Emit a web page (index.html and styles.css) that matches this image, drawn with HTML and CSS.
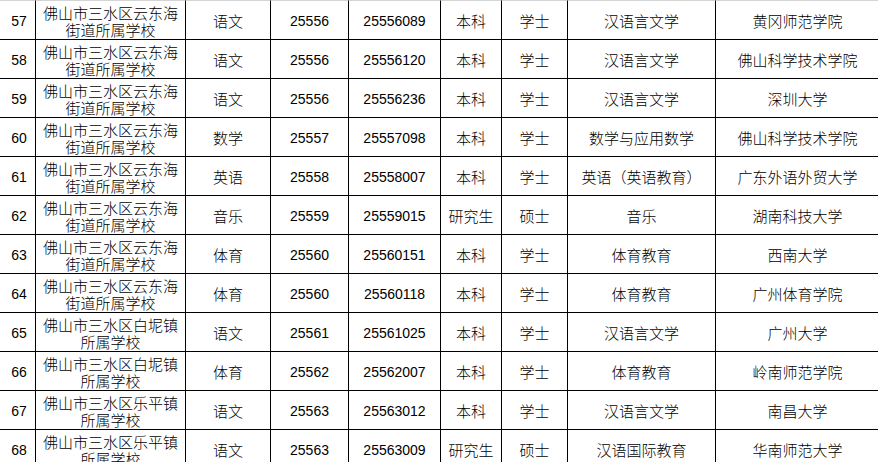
FILE: index.html
```html
<!DOCTYPE html>
<html lang="zh-CN">
<head>
<meta charset="utf-8">
<title>招聘岗位表</title>
<link rel="stylesheet" href="styles.css">
</head>
<body>
<table class="grid">
<colgroup>
<col class="c-idx"><col class="c-school"><col class="c-subj"><col class="c-code"><col class="c-post"><col class="c-edu"><col class="c-deg"><col class="c-major"><col class="c-uni">
</colgroup>
<tbody>
<tr><td class="num idx">57</td><td>佛山市三水区云东海<br>街道所属学校</td><td>语文</td><td class="num">25556</td><td class="num">25556089</td><td>本科</td><td>学士</td><td>汉语言文学</td><td>黄冈师范学院</td></tr>
<tr><td class="num idx">58</td><td>佛山市三水区云东海<br>街道所属学校</td><td>语文</td><td class="num">25556</td><td class="num">25556120</td><td>本科</td><td>学士</td><td>汉语言文学</td><td>佛山科学技术学院</td></tr>
<tr><td class="num idx">59</td><td>佛山市三水区云东海<br>街道所属学校</td><td>语文</td><td class="num">25556</td><td class="num">25556236</td><td>本科</td><td>学士</td><td>汉语言文学</td><td>深圳大学</td></tr>
<tr><td class="num idx">60</td><td>佛山市三水区云东海<br>街道所属学校</td><td>数学</td><td class="num">25557</td><td class="num">25557098</td><td>本科</td><td>学士</td><td>数学与应用数学</td><td>佛山科学技术学院</td></tr>
<tr><td class="num idx">61</td><td>佛山市三水区云东海<br>街道所属学校</td><td>英语</td><td class="num">25558</td><td class="num">25558007</td><td>本科</td><td>学士</td><td>英语（英语教育）</td><td>广东外语外贸大学</td></tr>
<tr><td class="num idx">62</td><td>佛山市三水区云东海<br>街道所属学校</td><td>音乐</td><td class="num">25559</td><td class="num">25559015</td><td>研究生</td><td>硕士</td><td>音乐</td><td>湖南科技大学</td></tr>
<tr><td class="num idx">63</td><td>佛山市三水区云东海<br>街道所属学校</td><td>体育</td><td class="num">25560</td><td class="num">25560151</td><td>本科</td><td>学士</td><td>体育教育</td><td>西南大学</td></tr>
<tr><td class="num idx">64</td><td>佛山市三水区云东海<br>街道所属学校</td><td>体育</td><td class="num">25560</td><td class="num">25560118</td><td>本科</td><td>学士</td><td>体育教育</td><td>广州体育学院</td></tr>
<tr><td class="num idx">65</td><td>佛山市三水区白坭镇<br>所属学校</td><td>语文</td><td class="num">25561</td><td class="num">25561025</td><td>本科</td><td>学士</td><td>汉语言文学</td><td>广州大学</td></tr>
<tr><td class="num idx">66</td><td>佛山市三水区白坭镇<br>所属学校</td><td>体育</td><td class="num">25562</td><td class="num">25562007</td><td>本科</td><td>学士</td><td>体育教育</td><td>岭南师范学院</td></tr>
<tr><td class="num idx">67</td><td>佛山市三水区乐平镇<br>所属学校</td><td>语文</td><td class="num">25563</td><td class="num">25563012</td><td>本科</td><td>学士</td><td>汉语言文学</td><td>南昌大学</td></tr>
<tr><td class="num idx">68</td><td>佛山市三水区乐平镇<br>所属学校</td><td>语文</td><td class="num">25563</td><td class="num">25563009</td><td>研究生</td><td>硕士</td><td>汉语国际教育</td><td>华南师范大学</td></tr>
</tbody>
</table>
</body>
</html>
```

FILE: styles.css
```css
html, body {
  margin: 0;
  padding: 0;
  background: #ffffff;
  overflow: hidden;
}
body {
  width: 878px;
  height: 462px;
  font-family: "Liberation Sans", "Noto Sans CJK SC", sans-serif;
  color: #000000;
}
.grid {
  border-collapse: separate;
  border-spacing: 0;
  table-layout: fixed;
  width: 880px;
}
.c-idx { width: 36px; }
.c-school { width: 150px; }
.c-subj { width: 85px; }
.c-code { width: 78px; }
.c-post { width: 92px; }
.c-edu { width: 61px; }
.c-deg { width: 66px; }
.c-major { width: 148px; }
.c-uni { width: 164px; }
.grid td {
  box-sizing: border-box;
  height: 39px;
  padding: 3px 0 0 0;
  border-right: 1px solid #000000;
  border-bottom: 1px solid #000000;
  text-align: center;
  vertical-align: middle;
  font-size: 15px;
  font-weight: 300;
  line-height: 17px;
  white-space: nowrap;
  overflow: hidden;
}
.grid tr:first-child td {
  border-top: 1px solid #d4d4d4;
  height: 40px;
}
.grid td.num {
  font-size: 14px;
  font-weight: 400;
}
.grid td.idx {
  padding-left: 3px;
}
```
